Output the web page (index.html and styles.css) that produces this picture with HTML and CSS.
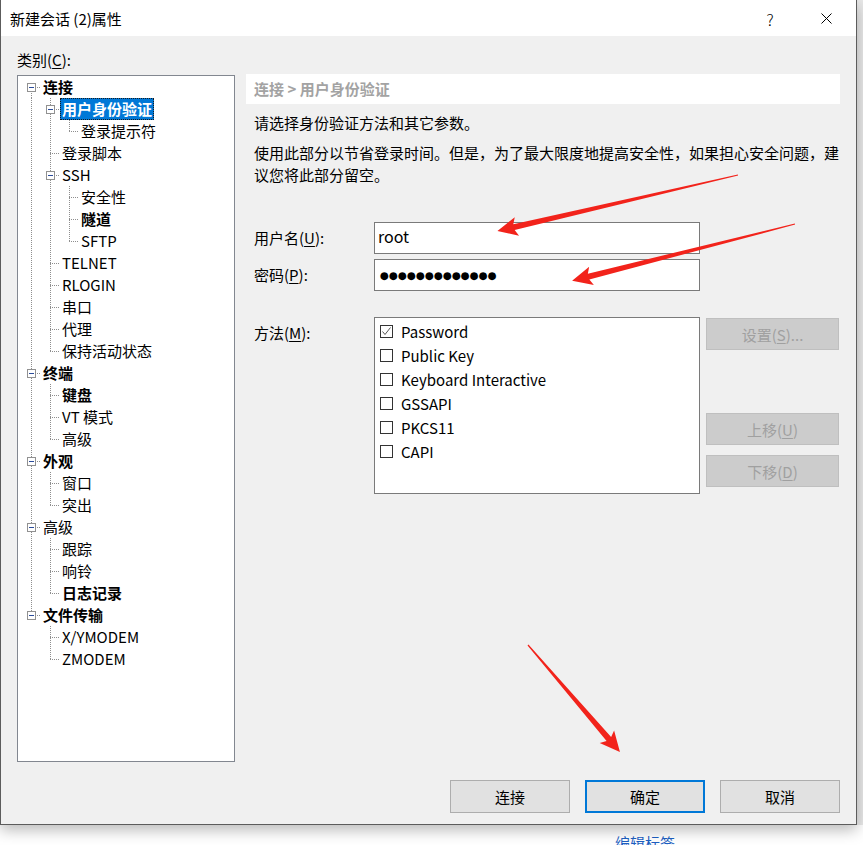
FILE: index.html
```html
<!DOCTYPE html>
<html lang="zh-CN">
<head>
  <meta charset="UTF-8">
  <title>新建会话 (2)属性</title>
  <link rel="stylesheet" href="styles.css">
</head>
<body>

  <div class="desk">
    <div class="dialog">
      <div class="titlebar">
        <span class="title">新建会话 (2)属性</span>
        <span class="tb-btn help">?</span>
        <span class="tb-btn close">
          <svg width="11" height="11" viewBox="0 0 11 11"><path d="M0.5 0.5 L10.5 10.5 M10.5 0.5 L0.5 10.5" stroke="#000" stroke-width="1" fill="none"/></svg>
        </span>
      </div>

      <div class="content">
        <div class="left">
          <div class="cat-label">类别(<u>C</u>):</div>
          <div class="tree">
            <div class="row"><span class="c xf"><i class="box"></i></span><span class="lbl b">连接</span></div>
            <div class="row"><span class="c v"></span><span class="c xt"><i class="box"></i></span><span class="lbl b sel">用户身份验证</span></div>
            <div class="row"><span class="c v"></span><span class="c v"></span><span class="c l"></span><span class="lbl">登录提示符</span></div>
            <div class="row"><span class="c v"></span><span class="c t"></span><span class="lbl">登录脚本</span></div>
            <div class="row"><span class="c v"></span><span class="c xt"><i class="box"></i></span><span class="lbl">SSH</span></div>
            <div class="row"><span class="c v"></span><span class="c v"></span><span class="c t"></span><span class="lbl">安全性</span></div>
            <div class="row"><span class="c v"></span><span class="c v"></span><span class="c t"></span><span class="lbl b">隧道</span></div>
            <div class="row"><span class="c v"></span><span class="c v"></span><span class="c l"></span><span class="lbl">SFTP</span></div>
            <div class="row"><span class="c v"></span><span class="c t"></span><span class="lbl">TELNET</span></div>
            <div class="row"><span class="c v"></span><span class="c t"></span><span class="lbl">RLOGIN</span></div>
            <div class="row"><span class="c v"></span><span class="c t"></span><span class="lbl">串口</span></div>
            <div class="row"><span class="c v"></span><span class="c t"></span><span class="lbl">代理</span></div>
            <div class="row"><span class="c v"></span><span class="c l"></span><span class="lbl">保持活动状态</span></div>
            <div class="row"><span class="c xt"><i class="box"></i></span><span class="lbl b">终端</span></div>
            <div class="row"><span class="c v"></span><span class="c t"></span><span class="lbl b">键盘</span></div>
            <div class="row"><span class="c v"></span><span class="c t"></span><span class="lbl">VT 模式</span></div>
            <div class="row"><span class="c v"></span><span class="c l"></span><span class="lbl">高级</span></div>
            <div class="row"><span class="c xt"><i class="box"></i></span><span class="lbl b">外观</span></div>
            <div class="row"><span class="c v"></span><span class="c t"></span><span class="lbl">窗口</span></div>
            <div class="row"><span class="c v"></span><span class="c l"></span><span class="lbl">突出</span></div>
            <div class="row"><span class="c xt"><i class="box"></i></span><span class="lbl">高级</span></div>
            <div class="row"><span class="c v"></span><span class="c t"></span><span class="lbl">跟踪</span></div>
            <div class="row"><span class="c v"></span><span class="c t"></span><span class="lbl">响铃</span></div>
            <div class="row"><span class="c v"></span><span class="c l"></span><span class="lbl b">日志记录</span></div>
            <div class="row"><span class="c xl"><i class="box"></i></span><span class="lbl b">文件传输</span></div>
            <div class="row"><span class="c"></span><span class="c t"></span><span class="lbl">X/YMODEM</span></div>
            <div class="row"><span class="c"></span><span class="c l"></span><span class="lbl">ZMODEM</span></div>
          </div>
        </div>

        <div class="right">
          <div class="crumb">连接 &gt; 用户身份验证</div>
          <p class="note">请选择身份验证方法和其它参数。</p>
          <p class="note">使用此部分以节省登录时间。但是，为了最大限度地提高安全性，如果担心安全问题，建议您将此部分留空。</p>

          <div class="creds">
            <label class="field-label">用户名(<u>U</u>):</label>
            <div class="input">root</div>
            <label class="field-label">密码(<u>P</u>):</label>
            <div class="input pw">●●●●●●●●●●●●●</div>
          </div>

          <div class="methods">
            <label class="field-label top">方法(<u>M</u>):</label>
            <div class="listbox">
              <div class="item"><span class="chk on"><svg width="11" height="11" viewBox="0 0 11 11"><path d="M1.5 5.5 L4 8.5 L9.5 1.5" stroke="#555" stroke-width="1" fill="none"/></svg></span>Password</div>
              <div class="item"><span class="chk"></span>Public Key</div>
              <div class="item"><span class="chk"></span>Keyboard Interactive</div>
              <div class="item"><span class="chk"></span>GSSAPI</div>
              <div class="item"><span class="chk"></span>PKCS11</div>
              <div class="item"><span class="chk"></span>CAPI</div>
            </div>
            <div class="side-btns">
              <button class="btn off">设置(<u>S</u>)...</button>
              <button class="btn off up">上移(<u>U</u>)</button>
              <button class="btn off down">下移(<u>D</u>)</button>
            </div>
          </div>
        </div>
      </div>

      <div class="footer">
        <button class="btn">连接</button>
        <button class="btn default">确定</button>
        <button class="btn">取消</button>
      </div>
    </div>
    <div class="backdrop"></div>
  </div>
  <div class="below"><span class="link">编辑标签</span></div>

  <svg class="marks" width="863" height="845" viewBox="0 0 863 845">
    <path transform="translate(738 175) rotate(166.9)" d="M0 -0.6 L230 -3 L227 -9.5 L247 0 L227 9.5 L230 3 L0 0.6 Z" fill="#f2231b"/>
    <path transform="translate(795 224) rotate(165.7)" d="M0 -0.6 L213 -3 L210 -9.5 L230 0 L210 9.5 L213 3 L0 0.6 Z" fill="#f2231b"/>
    <path transform="translate(528 645) rotate(49.3)" d="M0 -0.6 L124 -3 L121 -9.5 L141 0 L121 9.5 L124 3 L0 0.6 Z" fill="#f2231b"/>
  </svg>

</body>
</html>
```

FILE: styles.css
```css
* {
  box-sizing: border-box;
}
body {
  margin: 0;
  width: 863px;
  height: 845px;
  overflow: hidden;
  position: relative;
  background: #fff;
  font-family: "Noto Sans CJK SC", "Noto Sans", sans-serif;
  font-size: 15px;
  color: #000;
  --vd: repeating-linear-gradient(to bottom, #8e8e8e 0 1px, transparent 1px 2px);
  --hd: repeating-linear-gradient(to right, #8e8e8e 0 1px, transparent 1px 2px);
}
u {
  text-decoration: underline;
  text-underline-offset: 2px;
}

.desk {
  display: flex;
  height: 825px;
}
.dialog {
  width: 857px;
  height: 825px;
  flex: none;
  display: flex;
  flex-direction: column;
  background: #f0f0f0;
  border: 1px solid #5c5c5c;
  border-top: none;
  box-shadow: 0 5px 14px rgba(0,0,0,0.28);
  position: relative;
  z-index: 1;
}
.backdrop {
  flex: 1;
  background: #e9e9e9;
}

/* title bar */
.titlebar {
  height: 36px;
  flex: none;
  display: flex;
  align-items: center;
  padding-left: 9px;
  background: #fff;
}
.title {
  flex: 1;
  line-height: 20px;
  padding-top: 2px;
}
.tb-btn {
  width: 46px;
  height: 36px;
  display: flex;
  align-items: center;
  justify-content: center;
}
.tb-btn.help {
  font-size: 16px;
  font-weight: 300;
  padding-top: 1px;
  margin-right: 10px;
}
.tb-btn.close {
  margin-right: 7px;
}

/* main area */
.content {
  display: flex;
  gap: 11px;
  padding-left: 16px;
}
.left {
  width: 218px;
  flex: none;
}
.cat-label {
  margin-top: 14px;
  line-height: 20px;
}
.tree {
  margin-top: 5px;
  height: 687px;
  background: #fff;
  border: 1px solid #828790;
  padding-left: 4px;
}
.row {
  display: flex;
  align-items: center;
  height: 22px;
}
.c {
  flex: none;
  width: 19px;
  height: 22px;
  display: flex;
  align-items: center;
  justify-content: center;
  background-repeat: no-repeat;
}
.c.v {
  background-image: var(--vd);
  background-size: 1px 22px;
  background-position: 9px 0;
}
.c.t, .c.xt {
  background-image: var(--vd), var(--hd);
  background-size: 1px 22px, 10px 1px;
  background-position: 9px 0, 9px 11px;
}
.c.l, .c.xl {
  background-image: var(--vd), var(--hd);
  background-size: 1px 11px, 10px 1px;
  background-position: 9px 0, 9px 11px;
}
.c.xf {
  background-image: var(--vd), var(--hd);
  background-size: 1px 11px, 10px 1px;
  background-position: 9px 11px, 9px 11px;
}
.box {
  width: 9px;
  height: 9px;
  margin-left: -1px;
  border: 1px solid #919191;
  background: #fff;
  display: flex;
  align-items: center;
  justify-content: center;
}
.box::after {
  content: "";
  width: 5px;
  height: 1px;
  background: #2b4c9b;
}
.lbl {
  white-space: nowrap;
  line-height: 20px;
  padding: 0 1px;
  border: 1px solid transparent;
}
.lbl.b {
  font-weight: bold;
}
.lbl.sel {
  background: #0078d7;
  color: #fff;
  border: 1px dotted #1a1a1a;
}

/* right panel */
.right {
  width: 594px;
  flex: none;
  padding-top: 38px;
}
.crumb {
  height: 30px;
  line-height: 30px;
  padding-left: 8px;
  background: #fff;
  color: #a3a3a3;
  font-weight: bold;
}
.note {
  margin: 8px 0 0;
  padding-left: 8px;
  line-height: 22px;
}
.creds {
  margin-top: 36px;
  padding-left: 8px;
  display: grid;
  grid-template-columns: 120px 326px;
  grid-auto-rows: 32px;
  row-gap: 5px;
  align-items: center;
}
.field-label {
  line-height: 20px;
}
.field-label.top {
  align-self: start;
  margin-top: 6px;
}
.input {
  height: 32px;
  border: 1px solid #7a7a7a;
  background: #fff;
  padding-left: 3px;
  line-height: 26px;
  font-size: 16px;
}
.input.pw {
  font-family: "DejaVu Sans", sans-serif;
  font-size: 10.3px;
  line-height: 30px;
  padding-left: 5px;
}
.methods {
  margin-top: 26px;
  padding-left: 8px;
  display: grid;
  grid-template-columns: 120px 326px 139px;
}
.listbox {
  height: 177px;
  border: 1px solid #7a7a7a;
  background: #fff;
  padding: 1px 0 0 5px;
}
.item {
  height: 24px;
  display: flex;
  align-items: center;
  gap: 8px;
}
.chk {
  width: 13px;
  height: 13px;
  border: 1px solid #333;
  background: #fff;
  display: flex;
  align-items: center;
  justify-content: center;
}
.side-btns {
  display: flex;
  flex-direction: column;
  margin-left: 6px;
  padding-top: 1px;
}

/* buttons */
.btn {
  font-family: inherit;
  font-size: 15px;
  height: 33px;
  padding: 0;
  background: #e1e1e1;
  color: #000;
  border: 1px solid #adadad;
}
.btn.off {
  height: 32px;
  background: #cccccc;
  border-color: #bfbfbf;
  color: #a0a0a0;
}
.btn.up {
  margin-top: 63px;
}
.btn.down {
  margin-top: 10px;
}
.btn.default {
  border: 2px solid #0078d7;
}
.footer {
  margin-top: auto;
  display: flex;
  justify-content: flex-end;
  gap: 15px;
  padding: 0 16px 11px 0;
}
.footer .btn {
  width: 120px;
}

/* behind the dialog */
.below {
  height: 20px;
  padding: 8px 0 0 615px;
  line-height: 20px;
}
.link {
  color: #1d5fc2;
}
.marks {
  position: absolute;
  top: 0;
  left: 0;
  z-index: 5;
  pointer-events: none;
}
```
